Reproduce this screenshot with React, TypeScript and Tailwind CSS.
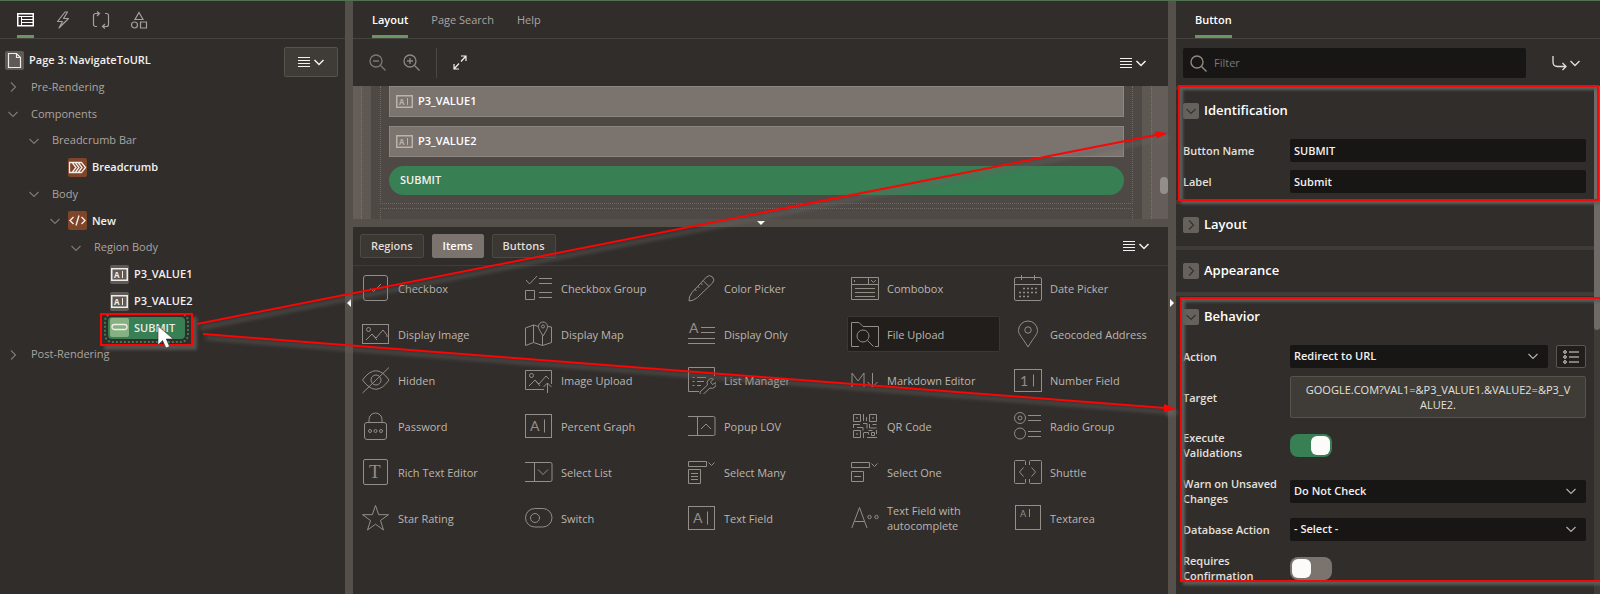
import React, { useState } from "react";

const MenuIcon = () => (
  <svg width="27" height="12" viewBox="0 0 27 12" fill="none" stroke="currentColor" aria-hidden="true">
    <path d="M0 1.5h12M0 4.5h12M0 7.5h12M0 10.5h12" />
    <path d="M16.500 4l4.500 4.500L25.500 4" strokeWidth="1.5" />
  </svg>
);

const Chevron = ({ open, className = "" }: { open: boolean; className?: string }) => (
  <svg width="12" height="12" viewBox="0 0 12 12" fill="none" stroke="currentColor" strokeWidth="1.2" className={className} aria-hidden="true">
    <path d={open ? "M1.5 4L6 8.5L10.5 4" : "M4 1.5L8.5 6L4 10.5"} />
  </svg>
);

const FieldGlyph = () => (
  <svg width="17" height="13" viewBox="0 0 17 13" fill="none" stroke="currentColor" aria-hidden="true">
    <rect x="0.75" y="0.75" width="15.5" height="11.5" strokeWidth="1.5" />
    <text x="3" y="9.5" fontSize="8" fontWeight="700" fontFamily="Open Sans, sans-serif" fill="currentColor" stroke="none">A</text>
    <path d="M11.5 3v7" />
  </svg>
);

/* ---------- left: component tree ---------- */

type NodeIcon = "page" | "breadcrumb" | "code" | "field" | "button";

interface TreeNode {
  label: string;
  level: number;
  icon?: NodeIcon;
  open?: boolean;
  selected?: boolean;
}

const tree: TreeNode[] = [
  { label: "Page 3: NavigateToURL", level: -1, icon: "page" },
  { label: "Pre-Rendering", level: 0, open: false },
  { label: "Components", level: 0, open: true },
  { label: "Breadcrumb Bar", level: 1, open: true },
  { label: "Breadcrumb", level: 2, icon: "breadcrumb" },
  { label: "Body", level: 1, open: true },
  { label: "New", level: 2, icon: "code", open: true },
  { label: "Region Body", level: 3, open: true },
  { label: "P3_VALUE1", level: 4, icon: "field" },
  { label: "P3_VALUE2", level: 4, icon: "field" },
  { label: "SUBMIT", level: 4, icon: "button", selected: true },
  { label: "Post-Rendering", level: 0, open: false },
];

const indent: Record<number, string> = {
  [-1]: "pl-[5px]",
  0: "pl-0",
  1: "pl-[21px]",
  2: "pl-[42px]",
  3: "pl-[63px]",
  4: "pl-[84px]",
};

const iconBg: Record<NodeIcon, string> = {
  page: "bg-[#5f5a55]",
  breadcrumb: "bg-[#7f4528]",
  code: "bg-[#7f4528]",
  field: "bg-[#5f5a55]",
  button: "bg-[#86b283]",
};

const nodeGlyph: Record<NodeIcon, React.ReactNode> = {
  page: (
    <svg width="19" height="19" viewBox="0 0 19 19" fill="none" stroke="currentColor" strokeWidth="1.2">
      <path d="M3.5 2.5h8l4 4v10h-12zM11.5 2.5v4h4" />
    </svg>
  ),
  breadcrumb: (
    <svg width="19" height="19" viewBox="0 0 19 19" fill="none" stroke="currentColor" strokeWidth="1.3">
      <path d="M1.5 4.5h12l4 5l-4 5h-12zM4.5 5l3.5 4.5l-3.5 4.5M7.5 5l3.5 4.5l-3.5 4.5M10.5 5l3.5 4.5l-3.5 4.5" />
    </svg>
  ),
  code: (
    <svg width="19" height="19" viewBox="0 0 19 19" fill="none" stroke="currentColor" strokeWidth="1.4">
      <path d="M5.5 6L2 9.5L5.5 13M13.5 6L17 9.5L13.5 13M11 4.5L8 14.5" />
    </svg>
  ),
  field: <FieldGlyph />,
  button: (
    <svg width="19" height="19" viewBox="0 0 19 19" fill="none" stroke="currentColor" strokeWidth="1.3">
      <rect x="2" y="6.5" width="15" height="5" rx="2.5" />
    </svg>
  ),
};

function TreeRow({ node }: { node: TreeNode }) {
  const hasIcon = node.icon !== undefined;
  return (
    <li className={`flex items-center ${indent[node.level]}`}>
      {node.level >= 0 && (
        <span className="flex w-[26px] shrink-0 justify-center text-[#7d7873]">
          {node.open !== undefined && <Chevron open={node.open} />}
        </span>
      )}
      <button
        className={
          node.selected
            ? "relative -ml-[2px] flex h-[22px] items-center gap-[5px] rounded-sm bg-[#387f54] pr-[10px] pl-[2px] font-semibold text-[#e8ece8] outline-2 outline-offset-2 outline-dotted outline-[#387f54]"
            : `flex items-center gap-[5px] ${hasIcon ? "text-[#f3f1ef] font-semibold" : "pl-[5px] text-[#aaa5a0] font-medium"}`
        }
      >
        {node.icon && (
          <span className={`flex size-[19px] items-center justify-center rounded-xs text-[#f1ece8] ${iconBg[node.icon]}`}>
            {nodeGlyph[node.icon]}
          </span>
        )}
        {node.label}
        {node.selected && (
          <>
            <span className="pointer-events-none absolute -inset-x-2 -top-1 -bottom-[7px] border-2 border-[#fb0505] shadow-[4px_4px_3px_#55524f]" />
            <svg className="pointer-events-none absolute top-2 left-[49px]" width="20" height="27" viewBox="0 0 20 27" aria-hidden="true">
              <path d="M1 1v19l4.500-4.500l3.500 7.500l3.500-1.500l-3.200-7.500h7z" fill="#fff" stroke="#333" strokeWidth="0.6" />
            </svg>
          </>
        )}
      </button>
    </li>
  );
}

function TreePanel() {
  return (
    <aside className="flex w-[345px] shrink-0 flex-col">
      <div className="flex h-[38px] items-stretch gap-5 border-b border-[#474340] px-[17px] text-[#a5a09b]">
        <button aria-label="Rendering" className="flex items-center border-b-3 border-[#6b9664] pt-[3px] text-white">
          <svg width="17" height="14" viewBox="0 0 17 14" fill="none" stroke="currentColor">
            <rect x="0.75" y="0.75" width="15.5" height="12" strokeWidth="1.5" />
            <path d="M1 3.500h15M4.500 3v10M5 6.500h11M5 9.500h11" />
          </svg>
        </button>
        <button aria-label="Dynamic Actions" className="flex items-center">
          <svg width="18" height="18" viewBox="0 0 18 18" fill="none" stroke="currentColor" strokeWidth="1.2" strokeLinejoin="round">
            <path d="M11 1L3.500 10.500h5L5 17L14.500 7.500H9.500L13.500 1z" />
          </svg>
        </button>
        <button aria-label="Processing" className="flex items-center">
          <svg width="18" height="18" viewBox="0 0 18 18" fill="none" stroke="currentColor" strokeWidth="1.2">
            <path d="M5 15.500H3.500a2 2 0 0 1-2-2v-9a2 2 0 0 1 2-2H7M5 .5l2.500 2L5 5M13 2.500h1.500a2 2 0 0 1 2 2v9a2 2 0 0 1-2 2H11M13 13l-2.500 2.500L13 17.500" />
          </svg>
        </button>
        <button aria-label="Page Shared Components" className="flex items-center">
          <svg width="18" height="18" viewBox="0 0 18 18" fill="none" stroke="currentColor" strokeWidth="1.2">
            <path d="M9 1.500L13 8.500H5zM10.500 11h6v6h-6z" />
            <circle cx="4.500" cy="14" r="3" />
          </svg>
        </button>
      </div>
      <div className="relative pt-2">
        <ul className="grid h-[321px] grid-rows-12">
          {tree.map((node) => (
            <TreeRow key={node.label} node={node} />
          ))}
        </ul>
        <button
          aria-label="Tree menu"
          className="absolute top-2 right-[7px] flex h-[30px] w-[54px] items-center justify-center rounded-xs border border-[#56524c] bg-[#3f3c37] text-[#f3f1ef]"
        >
          <MenuIcon />
        </button>
      </div>
    </aside>
  );
}

/* ---------- centre: layout and gallery ---------- */

const galleryIcons: Record<string, React.ReactNode> = {
  Checkbox: <><rect x="1.500" y="1.500" width="24" height="25" rx="2.500" /><path d="M8.500 14.500l3 3l7.500-7.500" /></>,
  "Checkbox Group": <><path d="M1 6l3.500 4L12 2M14 4.500h13M14 9.500h13M14 18.500h13M14 23.500h13M.5 16.500h9v9h-9z" /></>,
  "Color Picker": (
    <>
      <path d="M1 27q-.5-4 3-8.500L18.500 3a4.300 4.300 0 0 1 6 0a4.300 4.300 0 0 1 0 6L9.500 23.500Q5 27 1 27z" />
      <path d="M15 6.500l6 6M12.500 9l2 2M9.500 12l2 2M6.500 15l2 2" />
    </>
  ),
  Combobox: <><path d="M.5 3.500h27v22H.5zM.5 10.500h27M17.500 3.500v7M20 6l2.500 2.500L25 6M3.500 6v2M4 14.500h20M4 18.500h20M4 22.500h20" /></>,
  "Date Picker": (
    <>
      <rect x=".5" y="3.500" width="27" height="23" rx="1.500" />
      <path d="M.5 10.500h27M7.500 1v5M20.500 1v5" />
      <path d="M9 14.500h15M5 18.500h18M5 22.500h12" strokeDasharray="2 2" strokeWidth="1.6" />
    </>
  ),
  "Display Image": <><rect x=".5" y="4.500" width="26" height="19" /><circle cx="6.500" cy="9.500" r="2" /><path d="M4 20l6-6l4 4l7-8l4 5v2M10 14l5 6" /></>,
  "Display Map": <><path d="M13.500 6.500L8.500 5L.5 8v17.500l8-3l9 3l9-3V7l-4-.5M8.500 5v17.500M17.500 16v9.500M18 16C15 11 13.500 9 13.500 6.500a4.500 4.500 0 0 1 9 0C22.500 9 21 11 18 16z" /><circle cx="18" cy="6.500" r="1.500" /></>,
  "Display Only": <><text x="1" y="13" fontSize="14">A</text><path d="M13 7.500h14M13 12.500h14M0 18.500h27M0 23.500h27" /></>,
  "File Upload": <><path d="M8 26.500H.5v-24H8l4 4h15.500v20H24" /><circle cx="12" cy="16" r="6" /><path d="M16.500 20.500l6 6" /></>,
  "Geocoded Address": <><path d="M14 27C8 17 4.500 14.500 4.500 10.500a9.500 9.500 0 0 1 19 0C23.500 14.500 20 17 14 27z" /><circle cx="14" cy="10" r="3.200" /></>,
  Hidden: <><path d="M.5 14Q14-4.500 27 14Q14 32.500 .5 14zM.5 27L27 1.500" /><circle cx="14" cy="14" r="5" /></>,
  "Image Upload": <><path d="M19 23.500H.5v-19h26V18M4 20l6-6l4 4l7-8l3 3M10 14l5 6M22.500 27V17M18.500 21l4-4l4 4" /><circle cx="6.500" cy="9.500" r="2" /></>,
  "List Manager": <><path d="M11 25.500H.5v-24h26V10M9 11.500h9M9 15.500h7M9 19.500h4M4.500 11.500h2M4.500 15.500h2M4.500 19.500h2" /><path d="M13 25l6.500-6a4.500 4.500 0 0 1 6-6l-3 3l2 2.500l3.500-2a4.500 4.500 0 0 1-6 5.500L15 28.500a2 2 0 0 1-2-3.500z" /></>,
  "Markdown Editor": <><path d="M1 21V7l6 8l6-8v14M21.500 7v13.500M16.500 16l5 5l5-5" /></>,
  "Number Field": <><rect x=".5" y="3.500" width="27" height="22" /><text x="6" y="19.500" fontSize="14">1</text><path d="M19.500 8.500v12" /></>,
  Password: <><rect x="2.500" y="10.500" width="22" height="17" rx="2.500" /><path d="M7 10V7.500a6.500 6.500 0 0 1 13 0V10" /><circle cx="8" cy="19" r="1.500" /><circle cx="13.500" cy="19" r="1.500" /><circle cx="19" cy="19" r="1.500" /></>,
  "Percent Graph": <><rect x=".5" y="2.500" width="26" height="23" /><text x="5" y="19" fontSize="14">A</text><path d="M19.500 7.500v13" /></>,
  "Popup LOV": <><path d="M0 4.500h25.500q1.500 0 1.500 1.500v16q0 1.500-1.500 1.500H0M9.500 4.500v19M13 17l5-5l5 5" /></>,
  "QR Code": (
    <>
      <path d="M2.500 2.500h7v7h-7zM18.500 2.500h7v7h-7zM2.500 18.500h7v7h-7zM5 6h2M21 6h2M5 22h2M20.500 20.500h3v3h-3z" />
      <path d="M12.500 2v7M15.500 5v4M12 11.500h4v5M2 12.500h7M2.500 13v3M6 15.500h6v3M18.500 12v4h7M21.500 12.500h4M12.500 21v5M12.500 20.500h5v2M16 25.500h10M25.500 18v4M17.500 18.500h4" />
    </>
  ),
  "Radio Group": <><circle cx="6" cy="6" r="5.500" /><circle cx="6" cy="6" r="2" /><circle cx="6" cy="21.500" r="5.500" /><path d="M14 3.500h13M14 8.500h13M14 19.500h13M14 24.500h13" /></>,
  "Rich Text Editor": <><rect x="1.500" y="1.500" width="24" height="25" rx="1.500" /><text x="7" y="20" fontSize="19" fontFamily="Liberation Serif, serif">T</text></>,
  "Select List": <><path d="M0 4.500h25.500q1.500 0 1.500 1.500v16q0 1.500-1.500 1.500H0M9.500 4.500v19M13 11.500l5 5l5-5" /></>,
  "Select Many": <><path d="M.5 3.500h18v5H.5zM20.500 4.500l3 3l3-3M.5 11.500h12v14H.5zM3 15.500h7M3 18.500h7M3 21.500h7" /></>,
  "Select One": <><path d="M.5 4.500h18v5H.5zM20.500 5.500l3 3l3-3M.5 13.500h12v10H.5zM3 18.500h7" /></>,
  Shuttle: <><path d="M11.500 7V3.500q0-1-1-1h-9q-1 0-1 1v21q0 1 1 1h9q1 0 1-1V21M15.500 7V3.500q0-1 1-1h10q1 0 1 1v21q0 1-1 1h-10q-1 0-1-1V21M9.500 9.500L5.500 14l4 4.500M17.500 9.500l4 4.500l-4 4.500" /></>,
  "Star Rating": <path d="M13.500 1.500l3.200 9.200h9.800l-8 5.800l3 9.500l-8-5.800l-8 5.800l3-9.500l-8-5.800h9.800z" />,
  Switch: <><rect x=".5" y="4.500" width="26.500" height="18.500" rx="9.250" /><circle cx="10" cy="14" r="4.500" /></>,
  "Text Field": <><rect x=".5" y="2.500" width="26" height="23" /><text x="5" y="19" fontSize="14">A</text><path d="M19.500 7.500v13" /></>,
  "Text Field with autocomplete": <><path d="M.8 24L8.500 3.500L16 24M3.500 17.500h10" /><circle cx="18.500" cy="13" r="1.700" /><circle cx="25.500" cy="13" r="1.700" /></>,
  Textarea: <><rect x="1.500" y="1.500" width="25" height="24" /><text x="6" y="13" fontSize="9">A</text><path d="M15.500 5v8" /></>,
};

const galleryRows = [
  "Checkbox", "Checkbox Group", "Color Picker", "Combobox", "Date Picker",
  "Display Image", "Display Map", "Display Only", "File Upload", "Geocoded Address",
  "Hidden", "Image Upload", "List Manager", "Markdown Editor", "Number Field",
  "Password", "Percent Graph", "Popup LOV", "QR Code", "Radio Group",
  "Rich Text Editor", "Select List", "Select Many", "Select One", "Shuttle",
  "Star Rating", "Switch", "Text Field", "Text Field with autocomplete", "Textarea",
];

function GalleryItem({ name }: { name: string }) {
  const active = name === "File Upload";
  return (
    <button
      className={`flex h-9 items-center gap-2 rounded-xs border pl-[3px] text-left leading-[15px] font-medium text-[#bbb6b1] ${
        active ? "border-[#3b3733] bg-[#221e1b]" : "border-transparent"
      }`}
    >
      <svg width="28" height="28" viewBox="0 0 28 28" fill="none" stroke="#938e88" className="shrink-0 font-[Lato,sans-serif] font-normal [&_text]:fill-[#938e88] [&_text]:stroke-none" aria-hidden="true">
        {galleryIcons[name]}
      </svg>
      {name}
    </button>
  );
}

function LayoutCanvas() {
  return (
    <div className="relative flex h-[133px] shrink-0 overflow-hidden bg-[#4e4944]">
      <div className="w-[9px] border-r border-dotted border-[#7a756f] bg-[#655d59]" />
      <div className="w-[9px] bg-[#5e5853]" />
      <div className="mx-[9px] flex flex-1 flex-col gap-1">
        <div className="flex flex-col gap-[9px] border-x border-b border-dotted border-[#6d6863] px-2 pb-2">
          {["P3_VALUE1", "P3_VALUE2"].map((item) => (
            <div key={item} className="flex h-[31px] items-center gap-[5px] border border-[#8d8781] bg-[#7b736e] px-[6px] font-semibold text-white">
              <span className="text-[#b9b3ae]"><FieldGlyph /></span>
              {item}
            </div>
          ))}
          <div className="flex h-[29px] items-center rounded-full bg-[#387f54] px-[11px] font-semibold text-[#f3f1ef]">SUBMIT</div>
        </div>
        <div className="flex-1 border-x border-t border-dotted border-[#6d6863]" />
      </div>
      <div className="w-[9px] bg-[#5e5853]" />
      <div className="w-[17px] border-l border-dotted border-[#7a756f] bg-[#655d59]" />
      <div className="absolute top-[91px] right-0 h-[17px] w-2 rounded-full bg-[#938e89]" />
    </div>
  );
}

function CentrePanel() {
  return (
    <main className="flex min-w-0 flex-1 flex-col">
      <nav className="flex h-[38px] items-stretch gap-[23px] border-b border-[#474340] px-[19px] font-medium text-[#aaa5a0]">
        <button className="border-b-3 border-[#6b9664] pt-1 font-semibold text-white">Layout</button>
        <button className="pt-px">Page Search</button>
        <button className="pt-px">Help</button>
      </nav>
      <div className="flex h-[47px] shrink-0 items-center px-4">
        <button aria-label="Zoom out" className="text-[#7d7873]">
          <svg width="17" height="17" viewBox="0 0 17 17" fill="none" stroke="currentColor" strokeWidth="1.3">
            <circle cx="7" cy="7" r="6" /><path d="M4 7h6M11.500 11.500l5 5" />
          </svg>
        </button>
        <button aria-label="Zoom in" className="ml-[17px] text-[#8d8883]">
          <svg width="17" height="17" viewBox="0 0 17 17" fill="none" stroke="currentColor" strokeWidth="1.3">
            <circle cx="7" cy="7" r="6" /><path d="M4 7h6M7 4v6M11.500 11.500l5 5" />
          </svg>
        </button>
        <span className="mx-4 h-[30px] border-l border-[#4b4743]" />
        <button aria-label="Expand" className="text-[#f3f1ef]">
          <svg width="14" height="15" viewBox="0 0 14 15" fill="none" stroke="currentColor" strokeWidth="1.2">
            <path d="M8 1h5v5M13 1L8 6.500M1 9v5h5M1 14l5-5.500" />
          </svg>
        </button>
        <button aria-label="Layout menu" className="mr-[5px] ml-auto text-[#f3f1ef]"><MenuIcon /></button>
      </div>
      <LayoutCanvas />
      <div className="flex h-2 shrink-0 items-center justify-center bg-[#55504a]">
        <span className="border-x-4 border-t-4 border-x-transparent border-t-white" />
      </div>
      <div className="flex h-[39px] shrink-0 items-center gap-2 border-b border-[#403c38] px-[7px] font-semibold text-[#e0dcd8]">
        <button className="h-6 rounded-xs border border-[#4d4944] bg-[#3b3733] px-[10px]">Regions</button>
        <button className="h-6 rounded-xs border border-[#7b736e] bg-[#7b736e] px-[10px] text-white">Items</button>
        <button className="h-6 rounded-xs border border-[#4d4944] bg-[#3b3733] px-[10px]">Buttons</button>
        <button aria-label="Gallery menu" className="mr-[11px] ml-auto text-[#f3f1ef]"><MenuIcon /></button>
      </div>
      <div className="grid grid-cols-5 gap-[10px] px-[5px] pt-1">
        {galleryRows.map((name) => (
          <GalleryItem key={name} name={name} />
        ))}
      </div>
    </main>
  );
}

/* ---------- right: property editor ---------- */

function Section({ title, open = false, children }: { title: string; open?: boolean; children?: React.ReactNode }) {
  return (
    <section className="border-t-4 border-[#3f3b37]">
      <h2 className="flex h-[42px] items-center gap-[5px] pl-[7px] text-[13px] font-semibold text-white">
        <button aria-label={title} className="flex size-4 items-center justify-center rounded-xs bg-[#66615c] text-[#35312e]">
          <Chevron open={open} />
        </button>
        {title}
      </h2>
      {children && <div className="py-[3px]">{children}</div>}
    </section>
  );
}

function Field({ label, id, children }: { label: string; id: string; children: React.ReactNode }) {
  return (
    <div className="flex items-center pr-2 pl-[7px]">
      <label htmlFor={id} className="w-[107px] shrink-0 py-2 pr-2 leading-[15px] font-semibold text-[#e3e0dd]">{label}</label>
      <div className="flex flex-1 gap-2">{children}</div>
    </div>
  );
}

function SelectBox({ id, value }: { id: string; value: string }) {
  return (
    <span className="relative flex-1">
      <select id={id} className="block h-[23px] w-full appearance-none rounded-xs bg-[#181614] px-1 font-semibold text-[#f3f1ef]">
        <option>{value}</option>
      </select>
      <Chevron open className="pointer-events-none absolute top-[5px] right-[9px] text-[#b3aea9]" />
    </span>
  );
}

function Toggle({ id, initial }: { id: string; initial: boolean }) {
  const [on, setOn] = useState(initial);
  return (
    <input
      id={id}
      type="checkbox"
      role="switch"
      checked={on}
      onChange={(e) => setOn(e.target.checked)}
      className="flex h-[23px] w-[42px] appearance-none items-center rounded-lg bg-[#7b746e] px-[2px] before:size-[19px] before:rounded-md before:bg-[#fcfbfa] checked:justify-end checked:bg-[#387f54]"
    />
  );
}

const textBox = "h-[23px] min-w-0 flex-1 rounded-xs bg-[#181614] px-1 font-semibold text-[#f3f1ef]";

function PropertyPanel() {
  return (
    <aside className="flex w-[424px] shrink-0 flex-col overflow-hidden">
      <nav className="flex h-[38px] shrink-0 items-stretch border-b border-[#474340] px-[19px]">
        <button className="border-b-3 border-[#6b9664] pt-1 font-semibold text-white">Button</button>
      </nav>
      <div className="flex h-[47px] shrink-0 items-center justify-between pr-5 pl-[7px]">
        <div className="relative">
          <svg className="absolute top-[7px] left-[7px] text-[#8d8883]" width="17" height="17" viewBox="0 0 17 17" fill="none" stroke="currentColor" strokeWidth="1.4" aria-hidden="true">
            <circle cx="7" cy="7" r="6" /><path d="M11.500 11.500l5 5" />
          </svg>
          <input aria-label="Filter" placeholder="Filter" className="h-[30px] w-[343px] rounded-xs bg-[#181614] pl-[31px] placeholder:text-[#7d7873]" />
        </div>
        <button aria-label="Go to group" className="text-[#e3e0dd]">
          <svg width="28" height="16" viewBox="0 0 28 16" fill="none" stroke="currentColor" strokeWidth="1.3">
            <path d="M1 1v6q0 4.500 4.500 4.500h8M10.500 8l3.500 3.500L10.500 15M18.500 6l4.500 4.500L27.500 6" />
          </svg>
        </button>
      </div>
      <div className="flex min-h-0 flex-1">
        <div className="min-w-0 flex-1">
          <div className="relative">
            <Section title="Identification" open>
              <Field label="Button Name" id="button-name">
                <input id="button-name" defaultValue="SUBMIT" className={textBox} />
              </Field>
              <Field label="Label" id="label">
                <input id="label" defaultValue="Submit" className={textBox} />
              </Field>
            </Section>
            <span className="pointer-events-none absolute -top-px -right-[5px] -bottom-px left-[2px] z-10 border-2 border-[#f50808] shadow-[3px_3px_3px_#5a5f5c,inset_3px_3px_3px_#5a5f5c]" />
          </div>
          <Section title="Layout" />
          <Section title="Appearance" />
          <div className="relative">
            <Section title="Behavior" open>
              <Field label="Action" id="action">
                <SelectBox id="action" value="Redirect to URL" />
                <button aria-label="Pick action" className="flex h-[23px] w-[30px] items-center justify-center rounded-xs border border-[#5a5650] bg-[#221e1b] text-[#e3e0dd]">
                  <svg width="16" height="14" viewBox="0 0 16 14" fill="none" stroke="currentColor">
                    <path d="M6 2h10M6 7h10M6 12h10" />
                    <circle cx="2" cy="2" r="1.300" /><circle cx="2" cy="7" r="1.300" /><circle cx="2" cy="12" r="1.300" />
                  </svg>
                </button>
              </Field>
              <Field label="Target" id="target">
                <button id="target" className="my-1 h-[42px] flex-1 rounded-xs border border-[#56524c] bg-[#3f3c37] px-[14px] leading-[15px] font-medium break-all text-[#e3e0dd]">
                  GOOGLE.COM?VAL1=&amp;P3_VALUE1.&amp;VALUE2=&amp;P3_VALUE2.
                </button>
              </Field>
              <Field label="Execute Validations" id="execute-validations">
                <Toggle id="execute-validations" initial />
              </Field>
              <Field label="Warn on Unsaved Changes" id="warn-unsaved">
                <SelectBox id="warn-unsaved" value="Do Not Check" />
              </Field>
              <Field label="Database Action" id="database-action">
                <SelectBox id="database-action" value="- Select -" />
              </Field>
              <Field label="Requires Confirmation" id="requires-confirmation">
                <Toggle id="requires-confirmation" initial={false} />
              </Field>
            </Section>
            <span className="pointer-events-none absolute top-[5px] -right-2 bottom-3 left-1 z-10 border-2 border-[#f50808] shadow-[3px_3px_3px_#5a5f5c,inset_3px_3px_3px_#5a5f5c]" />
          </div>
        </div>
        <div className="w-[6px] bg-[#3f3b37]">
          <div className="h-[244px] rounded-b-full bg-[#6f6a65]" />
        </div>
      </div>
    </aside>
  );
}

/* ---------- callout arrows over the panels ---------- */

function Callouts() {
  return (
    <svg className="pointer-events-none absolute inset-0 z-20 size-full drop-shadow-[3px_4px_2px_#666462]" aria-hidden="true">
      <g stroke="#fb0505" strokeWidth="2" fill="#fb0505">
        <path d="M197 323L1156 134" />
        <path d="M203 333L1165 407" />
      </g>
      <path d="M1168 132L1155 130.500L1157 137.500z" fill="#fb0505" />
      <path d="M1176 408L1164 403L1164 411z" fill="#fb0505" />
    </svg>
  );
}

export default function App() {
  return (
    <div className="relative flex h-screen overflow-hidden border-t border-[#4f7350] bg-[#312d2a] font-['Open_Sans',sans-serif] text-[11px] text-[#f3f1ef]">
      <TreePanel />
      <div className="flex w-2 shrink-0 items-center bg-[#55504a] pt-[10px]">
        <span className="ml-[2px] border-y-4 border-r-4 border-y-transparent border-r-white" />
      </div>
      <CentrePanel />
      <div className="flex w-2 shrink-0 items-center bg-[#55504a] pt-[10px]">
        <span className="ml-[2px] border-y-4 border-l-4 border-y-transparent border-l-white" />
      </div>
      <PropertyPanel />
      <Callouts />
    </div>
  );
}
